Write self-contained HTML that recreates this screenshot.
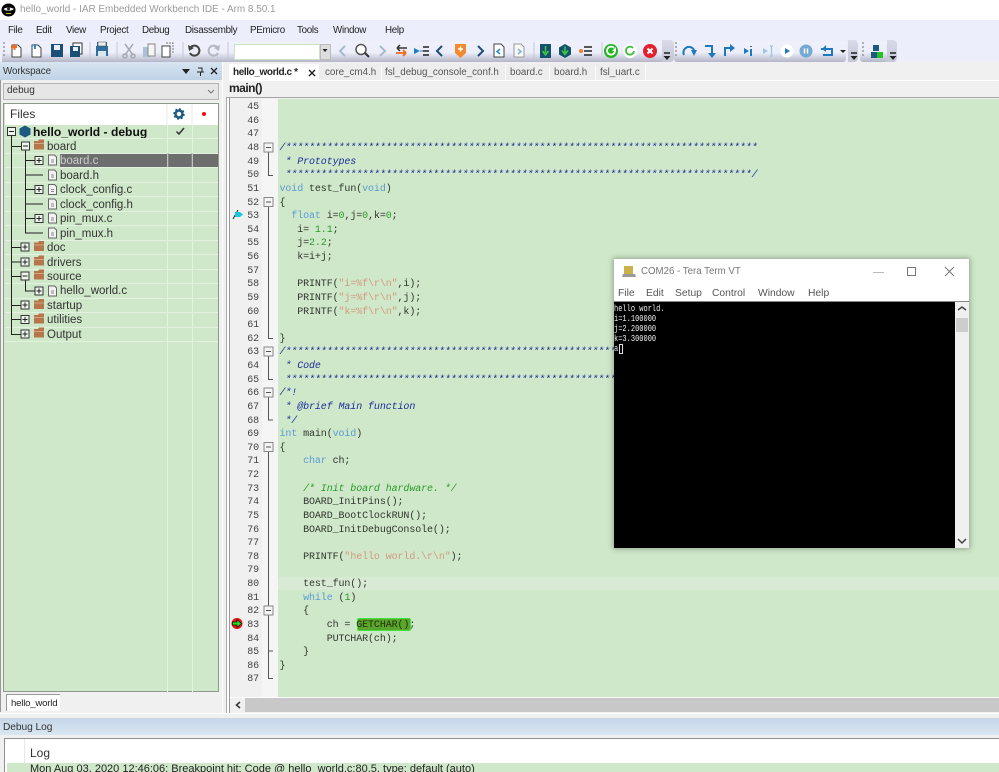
<!DOCTYPE html>
<html><head><meta charset="utf-8"><style>
html,body{margin:0;padding:0;width:999px;height:772px;overflow:hidden;background:#f0f0f0}
body{position:relative;font-family:"Liberation Sans",sans-serif;font-size:11px;color:#222}
.a,.t,.c,.n{position:absolute;white-space:pre}
.t{line-height:14px}
.me{top:24px;font-size:9.8px;letter-spacing:-.3px}
.c{left:279.5px;font:10px/14px "Liberation Mono",monospace;letter-spacing:-.1px;color:#30352e}
.n{left:240px;width:19px;text-align:right;font:10px/14px "Liberation Mono",monospace;letter-spacing:-.1px;color:#444}
.k{color:#5a9bd5}.g{color:#2a9a2a}.s{color:#d39a80}.m{color:#1c2c9c;font-style:italic}
.tree{font-size:11.5px;color:#333}
.tb{top:66px;font-size:9.8px;color:#555}
.tm{top:287px;font-size:10.3px;color:#555}
</style></head><body>
<!-- title -->
<div class="a" style="left:0;top:0;width:999px;height:20px;background:#fff"></div>
<div class="t" style="left:20px;top:3px;font-size:9.95px;color:#9a9a9a">hello_world - IAR Embedded Workbench IDE - Arm 8.50.1</div>
<!-- menu & toolbar -->
<div class="a" style="left:0;top:20px;width:999px;height:42px;background:#eceefb"></div>
<div class="t me" style="left:8px">File</div>
<div class="t me" style="left:36px">Edit</div>
<div class="t me" style="left:66px">View</div>
<div class="t me" style="left:100px">Project</div>
<div class="t me" style="left:142px">Debug</div>
<div class="t me" style="left:185px">Disassembly</div>
<div class="t me" style="left:250px">PEmicro</div>
<div class="t me" style="left:297px">Tools</div>
<div class="t me" style="left:333px">Window</div>
<div class="t me" style="left:385px">Help</div>
<div class="a" style="left:2px;top:41px;width:665px;height:21px;background:linear-gradient(#eff0fb 0,#eceefa 55%,#b4b6c8 100%)"></div>
<div class="a" style="left:662px;top:40px;width:12px;height:22px;border-radius:0 4px 4px 0;background:linear-gradient(#d8dae8,#c4c6d6)"></div>
<div class="a" style="left:674px;top:41px;width:172px;height:21px;background:linear-gradient(#eff0fb 0,#eceefa 55%,#b4b6c8 100%);border-radius:3px"></div>
<div class="a" style="left:848px;top:40px;width:10px;height:22px;border-radius:0 4px 4px 0;background:linear-gradient(#d8dae8,#c4c6d6)"></div>
<div class="a" style="left:860px;top:41px;width:28px;height:21px;background:linear-gradient(#eff0fb 0,#eceefa 55%,#b4b6c8 100%);border-radius:3px"></div>
<div class="a" style="left:887px;top:40px;width:10px;height:22px;border-radius:0 4px 4px 0;background:linear-gradient(#d8dae8,#c4c6d6)"></div>
<div class="a" style="left:234px;top:44px;width:84px;height:14px;background:#fff;border:1px solid #c9e4c3"></div>
<div class="a" style="left:320px;top:44px;width:9px;height:14px;background:#ddd;border:1px solid #bbb"></div>

<!-- workspace panel -->
<div class="a" style="left:0;top:62px;width:1px;height:650px;background:#999"></div>
<div class="a" style="left:222px;top:62px;width:1px;height:651px;background:#fff"></div>
<div class="a" style="left:0;top:62px;width:222px;height:18px;background:linear-gradient(#d8e5f1,#bfd3e6)"></div>
<div class="t" style="left:3px;top:65px;font-size:9.8px;letter-spacing:-.1px;color:#333">Workspace</div>
<div class="a" style="left:3px;top:83px;width:214px;height:15px;background:#e6e6e6;border:1px solid #b5b5b5"></div>
<div class="t" style="left:7px;top:84px;font-size:10px;color:#333">debug</div>
<div class="a" style="left:3px;top:103px;width:216px;height:589px;border:1px solid #8d9a8d;box-sizing:border-box;background:#cfe8c9"></div>
<div class="a" style="left:5px;top:104px;width:213px;height:21px;background:#fff"></div>
<div class="t" style="left:10px;top:107px;font-size:12px;color:#333">Files</div>
<div class="a" style="left:60px;top:153px;width:158px;height:14px;background:#6e6e6e"></div>
<div class="t tree" style="left:33px;top:125px;font-weight:bold;font-size:12.1px;color:#111">hello_world - debug</div>
<div class="t tree" style="left:47px;top:140px">board</div>
<div class="t tree" style="left:60px;top:154px;color:#ccc">board.c</div>
<div class="t tree" style="left:60px;top:169px">board.h</div>
<div class="t tree" style="left:60px;top:183px">clock_config.c</div>
<div class="t tree" style="left:60px;top:198px">clock_config.h</div>
<div class="t tree" style="left:60px;top:212px">pin_mux.c</div>
<div class="t tree" style="left:60px;top:227px">pin_mux.h</div>
<div class="t tree" style="left:47px;top:241px">doc</div>
<div class="t tree" style="left:47px;top:256px">drivers</div>
<div class="t tree" style="left:47px;top:270px">source</div>
<div class="t tree" style="left:60px;top:284px">hello_world.c</div>
<div class="t tree" style="left:47px;top:299px">startup</div>
<div class="t tree" style="left:47px;top:313px">utilities</div>
<div class="t tree" style="left:47px;top:328px">Output</div>
<div class="a" style="left:6px;top:694px;width:53px;height:16px;background:#fff;border:1px solid #999;border-width:1px 0 0 1px"></div>
<div class="t" style="left:11px;top:697px;font-size:9.6px;letter-spacing:-.2px;color:#222">hello_world</div>

<!-- editor -->
<div class="a" style="left:226px;top:62px;width:773px;height:18px;background:#f0f0f0"></div>
<div class="a" style="left:229px;top:64px;width:90px;height:16px;background:#fff"></div>
<div class="a" style="left:319px;top:64px;width:326px;height:16px;background:#ededed"></div>
<div class="a" style="left:381px;top:65px;width:1px;height:15px;background:#fafafa"></div>
<div class="a" style="left:505px;top:65px;width:1px;height:15px;background:#fafafa"></div>
<div class="a" style="left:549px;top:65px;width:1px;height:15px;background:#fafafa"></div>
<div class="a" style="left:595px;top:65px;width:1px;height:15px;background:#fafafa"></div>
<div class="a" style="left:645px;top:65px;width:1px;height:15px;background:#fafafa"></div>
<div class="t" style="left:233px;top:66px;font-size:10px;letter-spacing:-.4px;font-weight:bold;color:#222">hello_world.c *</div>
<div class="t tb" style="left:325px">core_cm4.h</div>
<div class="t tb" style="left:385px">fsl_debug_console_conf.h</div>
<div class="t tb" style="left:510px">board.c</div>
<div class="t tb" style="left:554px">board.h</div>
<div class="t tb" style="left:600px">fsl_uart.c</div>
<div class="a" style="left:229px;top:80px;width:770px;height:1px;background:#fff"></div>
<div class="t" style="left:229px;top:81px;font-size:12px;letter-spacing:-.5px;font-weight:bold;color:#222">main()</div>
<div class="a" style="left:226px;top:97px;width:773px;height:1px;background:#a5a5a5"></div>
<div class="a" style="left:226px;top:98px;width:1px;height:615px;background:#aaa"></div>
<div class="a" style="left:227px;top:98px;width:2px;height:615px;background:#fff"></div>
<div class="a" style="left:229px;top:98px;width:1px;height:615px;background:#999"></div>
<div class="a" style="left:230px;top:99px;width:32px;height:598px;background:#f0f0f0"></div>
<div class="a" style="left:262px;top:99px;width:16px;height:598px;background:#f5f5f5"></div>
<div class="a" style="left:278px;top:99px;width:721px;height:598px;background:#cfe8c9"></div>
<div class="a" style="left:278px;top:577px;width:721px;height:13px;background:#d8ead4"></div>
<div class="a" style="left:357px;top:618px;width:54px;height:13px;background:#5aa52c;border:1px solid #3fe23f;box-sizing:border-box;border-radius:2px"></div>

<div class="a" style="left:0;top:2px;width:999px;height:700px">
<!-- line numbers -->
<div class="n" style="top:99px">45</div><div class="n" style="top:113px">46</div><div class="n" style="top:126px">47</div><div class="n" style="top:140px">48</div><div class="n" style="top:154px">49</div><div class="n" style="top:167px">50</div><div class="n" style="top:181px">51</div><div class="n" style="top:195px">52</div><div class="n" style="top:208px">53</div><div class="n" style="top:222px">54</div><div class="n" style="top:235px">55</div><div class="n" style="top:249px">56</div><div class="n" style="top:263px">57</div><div class="n" style="top:276px">58</div><div class="n" style="top:290px">59</div><div class="n" style="top:304px">60</div><div class="n" style="top:317px">61</div><div class="n" style="top:331px">62</div><div class="n" style="top:344px">63</div><div class="n" style="top:358px">64</div><div class="n" style="top:372px">65</div><div class="n" style="top:385px">66</div><div class="n" style="top:399px">67</div><div class="n" style="top:413px">68</div><div class="n" style="top:426px">69</div><div class="n" style="top:440px">70</div><div class="n" style="top:453px">71</div><div class="n" style="top:467px">72</div><div class="n" style="top:481px">73</div><div class="n" style="top:494px">74</div><div class="n" style="top:508px">75</div><div class="n" style="top:522px">76</div><div class="n" style="top:535px">77</div><div class="n" style="top:549px">78</div><div class="n" style="top:562px">79</div><div class="n" style="top:576px">80</div><div class="n" style="top:590px">81</div><div class="n" style="top:603px">82</div><div class="n" style="top:617px">83</div><div class="n" style="top:631px">84</div><div class="n" style="top:644px">85</div><div class="n" style="top:658px">86</div><div class="n" style="top:671px">87</div>

<!-- code -->
<div class="c m" style="top:140px">/********************************************************************************</div>
<div class="c m" style="top:154px"> * Prototypes</div>
<div class="c m" style="top:167px"> *******************************************************************************/</div>
<div class="c" style="top:181px"><span class="k">void</span> test_fun(<span class="k">void</span>)</div>
<div class="c" style="top:195px">{</div>
<div class="c" style="top:208px">  <span class="k">float</span> i=<span class="g">0</span>,j=<span class="g">0</span>,k=<span class="g">0</span>;</div>
<div class="c" style="top:222px">   i= <span class="g">1.1</span>;</div>
<div class="c" style="top:235px">   j=<span class="g">2.2</span>;</div>
<div class="c" style="top:249px">   k=i+j;</div>
<div class="c" style="top:276px">   PRINTF(<span class="s">"i=%f\r\n"</span>,i);</div>
<div class="c" style="top:290px">   PRINTF(<span class="s">"j=%f\r\n"</span>,j);</div>
<div class="c" style="top:304px">   PRINTF(<span class="s">"k=%f\r\n"</span>,k);</div>
<div class="c" style="top:331px">}</div>
<div class="c m" style="top:344px">/********************************************************************************</div>
<div class="c m" style="top:358px"> * Code</div>
<div class="c m" style="top:372px"> *******************************************************************************/</div>
<div class="c m" style="top:385px">/*!</div>
<div class="c m" style="top:399px"> * @brief Main function</div>
<div class="c m" style="top:413px"> */</div>
<div class="c" style="top:426px"><span class="k">int</span> main(<span class="k">void</span>)</div>
<div class="c" style="top:440px">{</div>
<div class="c" style="top:453px">    <span class="k">char</span> ch;</div>
<div class="c m" style="top:481px;color:#2a9a2a">    /* Init board hardware. */</div>
<div class="c" style="top:494px">    BOARD_InitPins();</div>
<div class="c" style="top:508px">    BOARD_BootClockRUN();</div>
<div class="c" style="top:522px">    BOARD_InitDebugConsole();</div>
<div class="c" style="top:549px">    PRINTF(<span class="s">"hello world.\r\n"</span>);</div>
<div class="c" style="top:576px">    test_fun();</div>
<div class="c" style="top:590px">    <span class="k">while</span> (<span class="g">1</span>)</div>
<div class="c" style="top:603px">    {</div>
<div class="c" style="top:617px">        ch = <span style="color:#24300c">GETCHAR()</span>;</div>
<div class="c" style="top:631px">        PUTCHAR(ch);</div>
<div class="c" style="top:644px">    }</div>
<div class="c" style="top:658px">}</div>
</div>

<!-- scrollbar -->
<div class="a" style="left:230px;top:697px;width:769px;height:1px;background:#fff"></div>
<div class="a" style="left:245px;top:698px;width:754px;height:14px;background:#c8c8c8"></div>
<div class="a" style="left:0;top:713px;width:999px;height:1px;background:#fff"></div>
<!-- debug log -->
<div class="a" style="left:0;top:718px;width:999px;height:17px;background:linear-gradient(#c6d7e8,#d9e6f2)"></div>
<div class="t" style="left:3px;top:721px;font-size:10.2px;letter-spacing:-.05px;color:#333">Debug Log</div>
<div class="a" style="left:4px;top:738px;width:995px;height:34px;background:#fff;border-top:1px solid #8f8f8f;border-left:1px solid #8f8f8f;box-sizing:border-box"></div>
<div class="a" style="left:24px;top:739px;width:1px;height:24px;background:#e8e8e8"></div>
<div class="t" style="left:30px;top:746px;font-size:12px;color:#333">Log</div>
<div class="a" style="left:7px;top:763px;width:992px;height:9px;background:#cfe8c9"></div>
<div class="t" style="left:30px;top:762px;font-size:11px;color:#222">Mon Aug 03, 2020 12:46:06: Breakpoint hit: Code @ hello_world.c:80.5, type: default (auto)</div>

<!-- all icons and lines -->
<svg class="a" style="left:0;top:0" width="999" height="772" viewBox="0 0 999 772">
<defs>
<g id="pl"><rect x="-4" y="-4" width="8" height="8" fill="#eef5ec" stroke="#333" stroke-width="1"/><path d="M-2.500 0H2.500M0-2.500V2.500" stroke="#222"/></g>
<g id="mi"><rect x="-4" y="-4" width="8" height="8" fill="#eef5ec" stroke="#333" stroke-width="1"/><path d="M-2.500 0H2.500" stroke="#222"/></g>
<g id="fo"><path d="M-5-4H-1L0-5.500H5V4.500H-5Z" fill="#b4764a"/><path d="M-5-2H5V-1H-5Z" fill="#d6a47e"/></g>
<g id="fi"><path d="M-4-5H2L4-3V5H-4Z" fill="#f3f3f3" stroke="#666"/><path d="M-1.500 0H1.500M-1.500 2H1.500" stroke="#888"/></g>
<g id="fm"><rect x="-4.500" y="-4.500" width="9" height="9" fill="#f4f4f4" stroke="#888"/><path d="M-2.500 0H2.500" stroke="#555"/></g>
<g id="grip"><path d="M0-8v2M0-4v2M0 0v2M0 4v2" stroke="#999" stroke-width="1.500"/></g>
<g id="dd"><path d="M-3-3H3" stroke="#222" stroke-width="1.500"/><path d="M-3.500 0H3.500L0 4Z" fill="#222"/></g>
</defs>

<!-- title logo -->
<ellipse cx="8.500" cy="10" rx="7" ry="6.500" fill="#000"/><path d="M3.500 9C6 7 11 7 14 9C11 11.500 6 11.500 3.500 9Z" fill="#eee"/><circle cx="8.500" cy="9" r="1.500" fill="#222"/><path d="M6 13.500H11" stroke="#d0b030" stroke-width="1"/>

<!-- toolbar -->
<use href="#grip" x="4" y="50"/>
<path d="M12 45H18L21 48V57H12Z" fill="#fff" stroke="#444"/><path d="M11 47H17M14.500 44V50" stroke="#f06a1a" stroke-width="2"/>
<path d="M32 45H38L41 48V57H32Z" fill="#fff" stroke="#444"/><path d="M35 44V49" stroke="#2b8bd0" stroke-width="2"/>
<path d="M51 44H63V57H51Z" fill="#1b4f78"/><rect x="54" y="45" width="6" height="5" fill="#e8eef5"/>
<path d="M73 43H82V54H73Z" fill="#fff" stroke="#333"/><path d="M70 46H80V57H70Z" fill="#1b4f78"/><rect x="73" y="47" width="5" height="4" fill="#e8eef5"/>
<path d="M90 42V60" stroke="#c5c7d5"/>
<path d="M97 46V42H107V46M96 46H108V56H96Z" fill="#2e6d9e"/><rect x="98" y="51" width="8" height="5" fill="#dce6ef"/><rect x="98" y="42" width="8" height="4" fill="#e6edf3" stroke="#444" stroke-width=".5"/>
<path d="M117 42V60" stroke="#c5c7d5"/>
<path d="M125 44L133 55M133 44L125 55" stroke="#a6a8b4" stroke-width="1.500"/><circle cx="125" cy="56" r="2" fill="none" stroke="#a6a8b4" stroke-width="1.500"/><circle cx="133" cy="56" r="2" fill="none" stroke="#a6a8b4" stroke-width="1.500"/>
<path d="M143 47H150V57H143Z" fill="#a9c2d8"/><path d="M148 44H155V56H148Z" fill="#f5f5f5" stroke="#888"/>
<path d="M162 46H170V57H162Z" fill="#fff" stroke="#444"/><path d="M166 43H173V53" fill="none" stroke="#777" stroke-dasharray="2 1"/>
<path d="M183 42V60" stroke="#c5c7d5"/>
<path d="M191 47A5 5 0 1 1 190 53" fill="none" stroke="#444" stroke-width="2"/><path d="M188 45L189 51L194 48Z" fill="#444"/>
<path d="M217 47A5 5 0 1 0 218 53" fill="none" stroke="#b5b7c2" stroke-width="2"/><path d="M220 45L219 51L214 48Z" fill="#b5b7c2"/>
<path d="M228 42V60" stroke="#c5c7d5"/>
<path d="M322.500 49H327.500L325 52Z" fill="#222"/>
<path d="M345 46L340 51L345 56" fill="none" stroke="#a9b9c9" stroke-width="2"/>
<circle cx="361" cy="49.500" r="5" fill="#fff" stroke="#555" stroke-width="1.500"/><path d="M365 53L369 57" stroke="#333" stroke-width="2"/>
<path d="M380 46L385 51L380 56" fill="none" stroke="#a9b9c9" stroke-width="2"/>
<path d="M397 48H407M397 48L400 45M397 48L400 51" fill="none" stroke="#333" stroke-width="1.500"/><path d="M396 53H406M406 53L403 50M406 53L403 56" fill="none" stroke="#f06a1a" stroke-width="1.800"/>
<path d="M414 48L420 51L414 54Z" fill="#1e7fc4"/><path d="M420 51H424" stroke="#1e7fc4"/><path d="M423 47H429M423 51H429M423 55H429" stroke="#222" stroke-width="1.500"/>
<path d="M442 46L437 51L442 56" fill="none" stroke="#1d4f77" stroke-width="2"/>
<path d="M455 44H466V53L460.500 58L455 53Z" fill="#f28a30"/><path d="M458 49H463M460.500 46.500V51.500" stroke="#fff" stroke-width="1.500"/>
<path d="M478 46L483 51L478 56" fill="none" stroke="#1d4f77" stroke-width="2"/>
<path d="M494 44H501L504 47V57H494Z" fill="#fff" stroke="#444"/><path d="M500 49L497 51.500L500 54" fill="none" stroke="#2188cc" stroke-width="1.500"/>
<path d="M514 44H521L524 47V57H514Z" fill="#f8f8f8" stroke="#999"/><path d="M518 49L521 51.500L518 54" fill="none" stroke="#7fb4d8" stroke-width="1.500"/>
<path d="M534 42V60" stroke="#c5c7d5"/>
<rect x="540" y="44" width="11" height="14" fill="#16506f"/><path d="M545.500 46V53M542.500 51L545.500 55L548.500 51" fill="none" stroke="#3ecb3e" stroke-width="1.500"/>
<path d="M565 44L571 47.500V54.500L565 58L559 54.500V47.500Z" fill="#16506f"/><path d="M565 46.500V53M562 50.500L565 54.500L568 50.500" fill="none" stroke="#3ecb3e" stroke-width="1.500"/>
<circle cx="581" cy="51" r="2" fill="#f08030"/><path d="M584 47H592M584 51H592M584 55H592" stroke="#222" stroke-width="1.500"/>
<path d="M602 42V60" stroke="#c5c7d5"/>
<circle cx="611" cy="51" r="7" fill="#22b622"/><path d="M614 48A4 4 0 1 0 615 51" fill="none" stroke="#fff" stroke-width="1.800"/><path d="M612 51H616V47Z" fill="#fff"/>
<circle cx="630" cy="51" r="7" fill="#fff"/><path d="M633 48A4 4 0 1 0 634 51" fill="none" stroke="#3cc03c" stroke-width="1.800"/>
<circle cx="650" cy="51" r="7" fill="#e3202b"/><path d="M647.500 48.500L652.500 53.500M652.500 48.500L647.500 53.500" stroke="#fff" stroke-width="2"/>
<use href="#dd" x="667" y="56"/>
<use href="#grip" x="676" y="50"/>
<path d="M684 55A5.500 5.500 0 0 1 694 50" fill="none" stroke="#1d78bd" stroke-width="2"/><path d="M691 50H697L694 56Z" fill="#1d78bd"/>
<path d="M705 46H712V54" fill="none" stroke="#1d78bd" stroke-width="2"/><path d="M708 53H716L712 58Z" fill="#1d78bd"/>
<path d="M725 56V48H731" fill="none" stroke="#1d78bd" stroke-width="2"/><path d="M730 44V52L735 48Z" fill="#1d78bd"/>
<path d="M744 48L749 51L744 54Z" fill="#1d78bd"/><path d="M751 46V47M751 49V56" stroke="#1d78bd" stroke-width="2"/>
<path d="M763 48L768 51L763 54Z" fill="#9cc6e2"/><path d="M770 46H773M771.500 46V56M770 56H773" stroke="#9cc6e2" stroke-width="1.300"/>
<circle cx="787" cy="51" r="6.500" fill="#fff"/><path d="M785 48L790 51L785 54Z" fill="#1d78bd"/>
<circle cx="806" cy="51" r="6.500" fill="#74a9d0"/><path d="M804.500 48.500V53.500M807.500 48.500V53.500" stroke="#fff" stroke-width="1.500"/>
<path d="M821 49H832V55H823" fill="none" stroke="#1d78bd" stroke-width="2"/><path d="M826 45L822 49L826 52Z" fill="#1d78bd"/>
<path d="M840 50H846L843 53Z" fill="#222"/>
<use href="#dd" x="854" y="56"/>
<use href="#grip" x="863" y="50"/>
<rect x="873" y="45" width="6" height="6" fill="#1d5a80"/><rect x="871" y="52" width="6" height="6" fill="#1d5a80"/><rect x="877" y="52" width="6" height="6" fill="#22c322"/>
<use href="#dd" x="893" y="56"/>

<!-- workspace header icons -->
<path d="M182 69H190L186 74Z" fill="#222"/><path d="M198 68H202V72H204M197 72H204M200.500 72V76" fill="none" stroke="#222"/><path d="M211 68L217 74M217 68L211 74" stroke="#222" stroke-width="1.300"/>
<path d="M208 90L211 93L214 90" fill="none" stroke="#777"/>
<!-- tab close -->
<path d="M309 70L315 76M315 70L309 76" stroke="#222" stroke-width="1.400"/>

<!-- files header -->
<circle cx="179" cy="114" r="3.500" fill="none" stroke="#1d5a80" stroke-width="2.500"/><circle cx="179" cy="114" r="5" fill="none" stroke="#1d5a80" stroke-width="1.500" stroke-dasharray="2 1.900"/>
<circle cx="204" cy="114" r="2" fill="#f01010"/>
<path d="M167 104V125M192 104V125" stroke="#e8e8e8"/>
<!-- grid -->
<path d="M167.500 125V692M192.500 125V692" stroke="#e4f3e0"/>
<path d="M5 138.500H218M5 153.500H218M5 167.500H218M5 182.500H218M5 196.500H218M5 211.500H218M5 225.500H218M5 240.500H218M5 254.500H218M5 269.500H218M5 283.500H218M5 298.500H218M5 312.500H218M5 327.500H218M5 341.500H218" stroke="#e2f2de"/>
<path d="M168 153V167M192 153V167" stroke="#999"/>
<!-- tree lines -->
<path d="M11.500 136V334.500H21M11.500 146.500H21M11.500 247.500H21M11.500 262H21M11.500 276.500H21M11.500 305.500H21M11.500 319.500H21" fill="none" stroke="#222"/>
<path d="M25.500 150V233H43M25.500 160.500H35M25.500 175H43M25.500 189.500H35M25.500 204H43M25.500 218.500H35M25.500 280V291H35" fill="none" stroke="#222"/>
<use href="#mi" x="11.500" y="131.500"/>
<use href="#mi" x="25.500" y="146"/><use href="#pl" x="39" y="160.500"/><use href="#pl" x="39" y="189.500"/><use href="#pl" x="39" y="218.500"/>
<use href="#pl" x="25" y="247"/><use href="#pl" x="25" y="262"/><use href="#mi" x="25" y="276"/><use href="#pl" x="39" y="291"/><use href="#pl" x="25" y="305"/><use href="#pl" x="25" y="319.500"/><use href="#pl" x="25" y="334"/>
<path d="M25 125.500L30.500 128.500V134.500L25 137.500L19.500 134.500V128.500Z" fill="#1d5a80"/>
<path d="M176.500 131.500L179 134L184 128" fill="none" stroke="#333" stroke-width="1.500"/>
<use href="#fo" x="39" y="145"/><use href="#fo" x="39" y="246.500"/><use href="#fo" x="39" y="261"/><use href="#fo" x="39" y="275"/><use href="#fo" x="39" y="304.500"/><use href="#fo" x="39" y="319"/><use href="#fo" x="39" y="333"/>
<use href="#fi" x="52.500" y="160"/><use href="#fi" x="52.500" y="175"/><use href="#fi" x="52.500" y="189.500"/><use href="#fi" x="52.500" y="204"/><use href="#fi" x="52.500" y="218"/><use href="#fi" x="52.500" y="233"/><use href="#fi" x="52.500" y="291"/>

<!-- fold margin -->
<g fill="none" stroke="#555">
<path d="M268.500 152V175.500H273"/>
<path d="M268.500 206V338.500H273"/>
<path d="M268.500 356V379.500H273"/>
<path d="M268.500 397V420H273"/>
<path d="M268.500 452V678.500H273"/>
<path d="M268.500 651H273"/>
</g>
<use href="#fm" x="268.500" y="147.500"/><use href="#fm" x="268.500" y="202"/><use href="#fm" x="268.500" y="351.500"/><use href="#fm" x="268.500" y="392.500"/><use href="#fm" x="268.500" y="447"/><use href="#fm" x="268.500" y="610.500"/>

<!-- markers -->
<path d="M233 219L238 210" stroke="#222"/><path d="M235 212H240L243 214.500L240 217H235Z" fill="#1fc7dc"/>
<circle cx="237" cy="623.500" r="5.500" fill="#e81010"/><path d="M232.500 622H237V619.500L241.500 623.500L237 627.500V625H232.500Z" fill="#22dd22" stroke="#111" stroke-width=".7"/>
<!-- scroll arrow -->
<path d="M240 702L236.500 705L240 708" fill="none" stroke="#333" stroke-width="1.500"/>
</svg>

<!-- terminal -->
<div class="a" style="left:614px;top:259px;width:355px;height:289px;background:#fff;box-shadow:0 0 5px 1px rgba(70,80,70,.45)"></div>
<div class="t" style="left:641px;top:265px;font-size:9.7px;color:#777">COM26 - Tera Term VT</div>
<div class="t tm" style="left:618px">File</div>
<div class="t tm" style="left:646px">Edit</div>
<div class="t tm" style="left:675px">Setup</div>
<div class="t tm" style="left:712px">Control</div>
<div class="t tm" style="left:758px">Window</div>
<div class="t tm" style="left:808px">Help</div>
<div class="a" style="left:614px;top:301px;width:355px;height:1px;background:#888"></div>
<div class="a" style="left:614px;top:302px;width:341px;height:246px;background:#000"></div>
<div class="a" style="left:955px;top:302px;width:14px;height:246px;background:#f0f0f0"></div>
<div class="a" style="left:956px;top:318px;width:12px;height:14px;background:#cdcdcd"></div>
<div class="a" style="left:614px;top:304px;font:9px/10px 'Liberation Mono',monospace;color:#eee;white-space:pre;transform:scaleX(.78);transform-origin:0 0">hello world.
i=1.100000
j=2.200000
k=3.300000
a</div>
<div class="a" style="left:619px;top:344px;width:2px;height:8px;border:1px solid #ddd"></div>
<svg class="a" style="left:614px;top:259px" width="355" height="289" viewBox="0 0 355 289">
<rect x="10" y="7" width="9" height="8" fill="#c9b24a"/><path d="M9 15H21L22 18H8Z" fill="#999"/>
<path d="M259 13.500H270" stroke="#bbb"/><rect x="293.500" y="8.500" width="8" height="8" fill="none" stroke="#777"/><path d="M331 8L340 17M340 8L331 17" stroke="#777"/>
<path d="M344 51L348 48L352 51" fill="none" stroke="#444" stroke-width="1.500"/><path d="M344 280L348 284L352 280" fill="none" stroke="#444" stroke-width="1.500"/>
</svg>
</body></html>
